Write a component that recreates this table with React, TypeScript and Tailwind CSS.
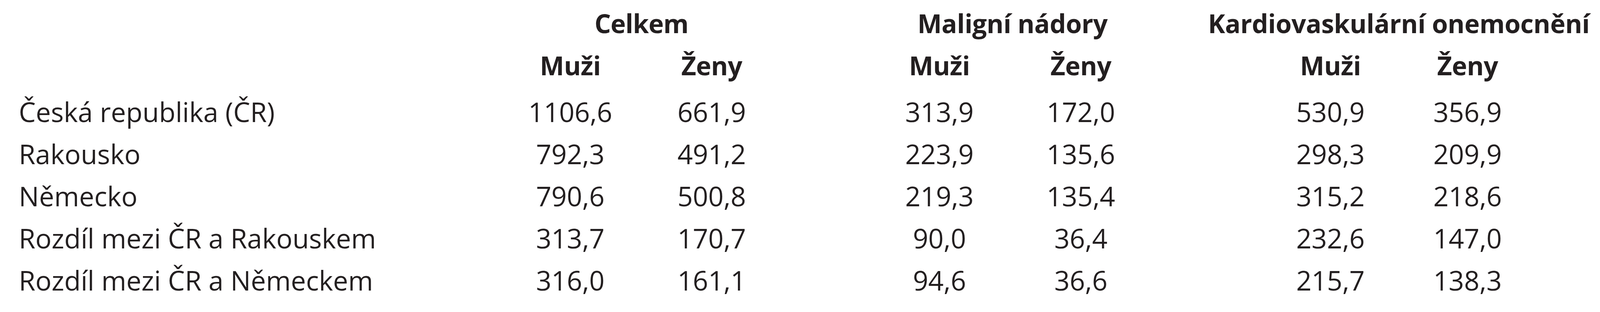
import React from "react";

const cols = "grid grid-cols-[1280px_360px_364px_226px_350px_374px_276px_352px_350px]";

const rows: [string, string[]][] = [
  ["Česká republika (ČR)", ["1106,6", "661,9", "313,9", "172,0", "530,9", "356,9"]],
  ["Rakousko", ["792,3", "491,2", "223,9", "135,6", "298,3", "209,9"]],
  ["Německo", ["790,6", "500,8", "219,3", "135,4", "315,2", "218,6"]],
  ["Rozdíl mezi ČR a Rakouskem", ["313,7", "170,7", "90,0", "36,4", "232,6", "147,0"]],
  ["Rozdíl mezi ČR a Německem", ["316,0", "161,1", "94,6", "36,6", "215,7", "138,3"]],
];

function Cell({ children, bold }: { children?: React.ReactNode; bold?: boolean }) {
  return (
    <div
      className={`flex justify-center whitespace-nowrap ${
        bold ? "font-bold text-[66px] tracking-[-0.5px]" : "font-normal"
      }`}
    >
      {children}
    </div>
  );
}

export default function App() {
  return (
    <div
      className="w-[4133px] h-[800px] bg-white text-[#231f20] text-[69px] leading-[108px] pt-[5px] overflow-hidden"
      style={{ fontFamily: '"Open Sans", "Noto Sans", sans-serif' }}
    >
      <div className={`${cols} h-[108px]`}>
        <div />
        <div className="col-span-2 flex justify-center whitespace-nowrap font-bold text-[66px] tracking-[-1px]">
          Celkem
        </div>
        <div />
        <div className="col-span-2 flex justify-center whitespace-nowrap font-bold text-[66px] tracking-[-0.5px]">
          Maligní nádory
        </div>
        <div />
        <div className="col-span-2 flex justify-center whitespace-nowrap font-bold text-[66px] tracking-[-0.5px]">
          Kardiovaskulární onemocnění
        </div>
      </div>
      <div className={`${cols} h-[108px]`}>
        <div />
        <Cell bold>Muži</Cell>
        <Cell bold>Ženy</Cell>
        <div />
        <Cell bold>Muži</Cell>
        <Cell bold>Ženy</Cell>
        <div />
        <Cell bold>Muži</Cell>
        <Cell bold>Ženy</Cell>
      </div>
      <div className="mt-[11px]">
        {rows.map(([label, v]) => (
          <div key={label} className={`${cols} h-[108px]`}>
            <div className="pl-[48px] whitespace-nowrap">{label}</div>
            <Cell>{v[0]}</Cell>
            <Cell>{v[1]}</Cell>
            <div />
            <Cell>{v[2]}</Cell>
            <Cell>{v[3]}</Cell>
            <div />
            <Cell>{v[4]}</Cell>
            <Cell>{v[5]}</Cell>
          </div>
        ))}
      </div>
    </div>
  );
}
